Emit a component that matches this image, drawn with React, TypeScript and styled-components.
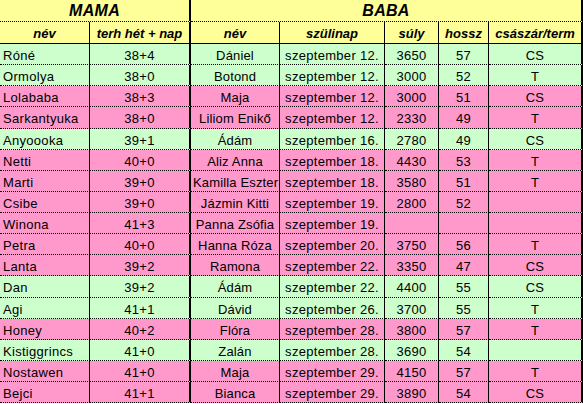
import React from 'react';
import styled, { createGlobalStyle } from 'styled-components';

type Row = {
  mom: string;
  week: string;
  baby: string;
  born: string;
  weight: string;
  length: string;
  kind: string;
  green?: boolean;
};

const rows: Row[] = [
  { mom: 'Róné', week: '38+4', baby: 'Dániel', born: 'szeptember 12.', weight: '3650', length: '57', kind: 'CS', green: true },
  { mom: 'Ormolya', week: '38+0', baby: 'Botond', born: 'szeptember 12.', weight: '3000', length: '52', kind: 'T', green: true },
  { mom: 'Lolababa', week: '38+3', baby: 'Maja', born: 'szeptember 12.', weight: '3000', length: '51', kind: 'CS' },
  { mom: 'Sarkantyuka', week: '38+0', baby: 'Liliom Enikő', born: 'szeptember 12.', weight: '2330', length: '49', kind: 'T' },
  { mom: 'Anyoooka', week: '39+1', baby: 'Ádám', born: 'szeptember 16.', weight: '2780', length: '49', kind: 'CS', green: true },
  { mom: 'Netti', week: '40+0', baby: 'Aliz Anna', born: 'szeptember 18.', weight: '4430', length: '53', kind: 'T' },
  { mom: 'Marti', week: '39+0', baby: 'Kamilla Eszter', born: 'szeptember 18.', weight: '3580', length: '51', kind: 'T' },
  { mom: 'Csibe', week: '39+0', baby: 'Jázmin Kitti', born: 'szeptember 19.', weight: '2800', length: '52', kind: '' },
  { mom: 'Winona', week: '41+3', baby: 'Panna Zsófia', born: 'szeptember 19.', weight: '', length: '', kind: '' },
  { mom: 'Petra', week: '40+0', baby: 'Hanna Róza', born: 'szeptember 20.', weight: '3750', length: '56', kind: 'T' },
  { mom: 'Lanta', week: '39+2', baby: 'Ramona', born: 'szeptember 22.', weight: '3350', length: '47', kind: 'CS' },
  { mom: 'Dan', week: '39+2', baby: 'Ádám', born: 'szeptember 22.', weight: '4400', length: '55', kind: 'CS', green: true },
  { mom: 'Agi', week: '41+1', baby: 'Dávid', born: 'szeptember 26.', weight: '3700', length: '55', kind: 'T', green: true },
  { mom: 'Honey', week: '40+2', baby: 'Flóra', born: 'szeptember 28.', weight: '3800', length: '57', kind: 'T' },
  { mom: 'Kistiggrincs', week: '41+0', baby: 'Zalán', born: 'szeptember 28.', weight: '3690', length: '54', kind: '', green: true },
  { mom: 'Nostawen', week: '41+0', baby: 'Maja', born: 'szeptember 29.', weight: '4150', length: '57', kind: 'T' },
  { mom: 'Bejci', week: '41+1', baby: 'Bianca', born: 'szeptember 29.', weight: '3890', length: '54', kind: 'CS' },
];

const YELLOW = '#ffff99';
const GREEN = '#ccffcc';
const PINK = '#ff99cc';

const GlobalStyle = createGlobalStyle`
  html, body {
    margin: 0;
    padding: 0;
    background: #ffffff;
  }
`;

const Sheet = styled.div`
  display: grid;
  grid-template-columns: 90px 101px 89px 105px 54px 50px 94px;
  grid-template-rows: 22px 22px;
  grid-auto-rows: 21.125px;
  width: 583px;
  height: 404px;
  overflow: hidden;
  font-family: 'Liberation Sans', Arial, sans-serif;
  font-size: 13px;
  color: #000;
`;

type CellProps = {
  $bg: string;
  $left?: boolean;
  $thick?: boolean;
  $solidBottom?: boolean;
};

const Cell = styled.div<CellProps>`
  box-sizing: border-box;
  display: flex;
  align-items: center;
  justify-content: ${(p) => (p.$left ? 'flex-start' : 'center')};
  padding: 3px ${(p) => (p.$left ? '3px' : '2px')} 0;
  letter-spacing: 0.3px;
  background: ${(p) => p.$bg};
  border-right: ${(p) => (p.$thick ? '2px solid #000' : '1px solid #000')};
  border-bottom: 1px ${(p) => (p.$solidBottom ? 'solid' : 'dotted')} #000;
  white-space: nowrap;
  overflow: hidden;
`;

const GroupTitle = styled(Cell)<{ $span: number }>`
  grid-column: span ${(p) => p.$span};
  font-size: 16px;
  font-weight: bold;
  font-style: italic;
  letter-spacing: 0.3px;
  padding-top: 1px;
`;

const HeadCell = styled(Cell)`
  font-weight: bold;
  font-style: italic;
  letter-spacing: 0;
  padding-top: 1px;
`;

const NameText = styled.span`
  display: block;
  min-width: 0;
  letter-spacing: 0.15px;
`;

const heads = ['név', 'terh hét + nap', 'név', 'szülinap', 'súly', 'hossz', 'császár/term'];

export default function App() {
  return (
    <>
      <GlobalStyle />
      <Sheet>
        <GroupTitle $bg={YELLOW} $span={2} $thick>
          MAMA
        </GroupTitle>
        <GroupTitle $bg={YELLOW} $span={5} $thick>
          BABA
        </GroupTitle>
        {heads.map((h, i) => (
          <HeadCell key={i} $bg={YELLOW} $solidBottom $thick={i === 1 || i === 6}>
            {h}
          </HeadCell>
        ))}
        {rows.map((r, i) => {
          const bg = r.green ? GREEN : PINK;
          return (
            <React.Fragment key={i}>
              <Cell $bg={bg} $left>
                {r.mom}
              </Cell>
              <Cell $bg={bg} $thick>
                {r.week}
              </Cell>
              <Cell $bg={bg}>
                <NameText>{r.baby}</NameText>
              </Cell>
              <Cell $bg={bg}>{r.born}</Cell>
              <Cell $bg={bg}>{r.weight}</Cell>
              <Cell $bg={bg}>{r.length}</Cell>
              <Cell $bg={bg} $thick>
                {r.kind}
              </Cell>
            </React.Fragment>
          );
        })}
      </Sheet>
    </>
  );
}
